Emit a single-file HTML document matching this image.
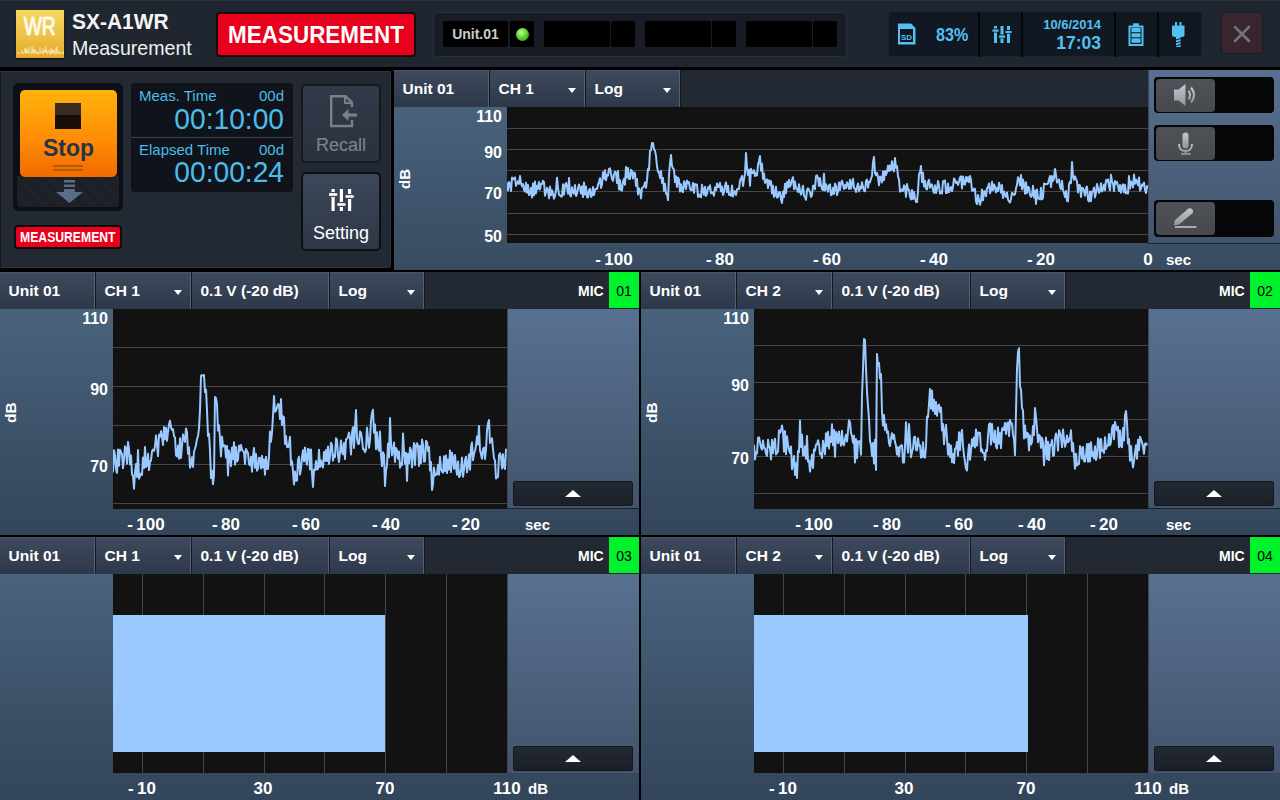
<!DOCTYPE html>
<html><head><meta charset="utf-8">
<style>
*{margin:0;padding:0;box-sizing:border-box}
html,body{width:1280px;height:800px;overflow:hidden;background:#000;font-family:"Liberation Sans",sans-serif;color:#fff}
.a{position:absolute}
.topbar{left:0;top:0;width:1280px;height:67px;background:#1f2630;border-top:1px solid #2c3440}
.hdr{background:linear-gradient(#3a4454,#2a323e)}
.tab{position:absolute;top:0;height:37px;background:linear-gradient(#3e4a5d,#2d384a);border-right:1px solid #141920;box-shadow:inset -1px 0 #56616f,inset 0 1px #475366;font-weight:bold;font-size:15.5px;line-height:38px;padding-left:8.5px}
.dd{position:absolute;right:9px;top:18px;width:0;height:0;border-left:4px solid transparent;border-right:4px solid transparent;border-top:5px solid #fff}
.axisbg{background:linear-gradient(#4c6883,#33455a)}
.plot{position:absolute;background:#121212;overflow:hidden}
.gl{position:absolute;left:0;right:0;height:1px;background:#464646}
.vl{position:absolute;top:0;bottom:0;width:1px;background:#464646}
.lbl{position:absolute;font-size:16px;font-weight:bold;color:#fff;white-space:nowrap}
.lblr{position:absolute;font-size:16px;font-weight:bold;color:#fff;white-space:nowrap;text-align:right}
.sidebg{background:linear-gradient(#587190,#43546c);box-shadow:inset 1px 0 #3a4658}
.upbtn{position:absolute;background:linear-gradient(#232932,#1b2028);border:1px solid #14181e;border-radius:2px}
.upbtn:after{content:"";position:absolute;left:50%;top:8px;margin-left:-8px;border-left:8px solid transparent;border-right:8px solid transparent;border-bottom:7px solid #fff}
.cell{position:absolute;background:#000;border-radius:2px}
</style></head><body>

<!-- ================= TOP BAR ================= -->
<div class="a topbar"></div>
<!-- logo -->
<div class="a" style="left:16px;top:10px;width:48px;height:48px;background:linear-gradient(#f6d662,#eec447 50%,#e4a82a);box-shadow:0 1px 1px #0a0c10;overflow:hidden">
  <div class="a" style="left:0;top:1px;width:48px;text-align:center;font-size:26px;color:#fbfbf4;-webkit-text-stroke:0.5px #fbfbf4;text-shadow:0 0 2px #fff6c0"><span style="display:inline-block;transform:scaleX(0.74)">WR</span></div>
  <svg class="a" style="left:0;top:0" width="48" height="48"><polyline points="1.0,42.3 1.5,42.8 2.0,42.1 2.5,44.0 3.0,43.8 3.5,43.1 4.0,43.4 4.5,43.4 5.0,43.0 5.5,43.4 6.0,40.2 6.5,42.0 7.0,41.9 7.5,44.1 8.0,42.5 8.5,42.6 9.0,38.2 9.5,43.3 10.0,37.7 10.5,43.6 11.0,39.5 11.5,43.0 12.0,42.0 12.5,43.8 13.0,37.0 13.5,41.5 14.0,40.8 14.5,43.7 15.0,44.0 15.5,42.8 16.0,35.7 16.5,42.9 17.0,38.7 17.5,43.4 18.0,40.1 18.5,44.3 19.0,39.2 19.5,42.1 20.0,40.9 20.5,43.9 21.0,41.7 21.5,44.4 22.0,42.3 22.5,44.0 23.0,43.2 23.5,43.8 24.0,37.4 24.5,43.3 25.0,41.5 25.5,41.6 26.0,41.9 26.5,43.5 27.0,38.2 27.5,43.8 28.0,40.8 28.5,42.7 29.0,39.6 29.5,41.9 30.0,36.5 30.5,43.0 31.0,40.3 31.5,44.1 32.0,42.6 32.5,42.9 33.0,40.0 33.5,43.3 34.0,42.8 34.5,44.7 35.0,37.8 35.5,43.2 36.0,40.0 36.5,43.5 37.0,39.8 37.5,43.0 38.0,40.4 38.5,41.8 39.0,44.7 39.5,42.3 40.0,38.2 40.5,44.0 41.0,36.6 41.5,43.3 42.0,43.0 42.5,43.6 43.0,40.5 43.5,43.5 44.0,42.1 44.5,44.0 45.0,43.4 45.5,42.8 46.0,43.5 46.5,44.2 47.0,41.0 47.5,44.4" fill="none" stroke="#fff8d8" stroke-width="0.7" opacity=".75"/></svg>
</div>
<div class="a" style="left:72px;top:9px;font-size:21.7px;font-weight:bold;color:#f4f4f4;transform:scaleX(0.965);transform-origin:left">SX-A1WR</div>
<div class="a" style="left:72px;top:37px;font-size:19.6px;color:#f0f0f0">Measurement</div>
<!-- red MEASUREMENT -->
<div class="a" style="left:216px;top:12px;width:200px;height:45px;background:#e8001c;border:2px solid #120a0c;border-radius:4px;font-size:24px;font-weight:bold;display:flex;justify-content:center;align-items:center;white-space:nowrap"><span style="display:inline-block;transform:scaleX(0.935)">MEASUREMENT</span></div>
<!-- status box -->
<div class="a" style="left:433px;top:12px;width:414px;height:45px;background:#181d25;border:1px solid #2a313c;border-radius:4px"></div>
<div class="cell" style="left:443px;top:21px;width:65px;height:26px;font-size:14px;font-weight:bold;color:#cbcbcb;text-align:center;line-height:26px">Unit.01</div>
<div class="cell" style="left:510px;top:21px;width:24px;height:26px"></div>
<div class="a" style="left:516px;top:28px;width:13px;height:13px;border-radius:50%;background:radial-gradient(circle at 40% 35%,#b8ff90,#4ec020 60%,#2a8a10)"></div>
<div class="cell" style="left:544px;top:21px;width:66px;height:26px"></div>
<div class="cell" style="left:611px;top:21px;width:24px;height:26px"></div>
<div class="cell" style="left:645px;top:21px;width:66px;height:26px"></div>
<div class="cell" style="left:712px;top:21px;width:24px;height:26px"></div>
<div class="cell" style="left:746px;top:21px;width:66px;height:26px"></div>
<div class="cell" style="left:813px;top:21px;width:24px;height:26px"></div>
<!-- right status -->
<div class="a" style="left:888px;top:11px;width:314px;height:46px;background:#121821;border:1px solid #1b222c;border-radius:4px"></div>
<div class="a" style="left:978px;top:12px;width:1.5px;height:45px;background:#05070a"></div>
<div class="a" style="left:1021px;top:12px;width:1.5px;height:45px;background:#05070a"></div>
<div class="a" style="left:1114px;top:12px;width:1.5px;height:45px;background:#05070a"></div>
<div class="a" style="left:1157px;top:12px;width:1.5px;height:45px;background:#05070a"></div>
<svg class="a" style="left:897px;top:23px" width="20" height="23">
 <path d="M1,0.5 H14 L18.5,5 V21.5 H1 Z" fill="#52c0f0"/>
 <rect x="3" y="6" width="13" height="13" fill="#121821"/>
 <text x="9.5" y="16.5" font-size="8" font-weight="bold" fill="#52c0f0" text-anchor="middle" font-family="Liberation Sans">SD</text>
</svg>
<div class="a" style="left:936px;top:24px;font-size:18.5px;font-weight:bold;color:#52c0f0;transform:scaleX(0.87);transform-origin:left">83%</div>
<svg class="a" style="left:992px;top:25px" width="21" height="19">
 <g fill="#52c0f0"><rect x="2" y="1" width="3" height="17"/><rect x="8.5" y="1" width="3" height="17"/><rect x="15" y="1" width="3" height="17"/></g>
 <g fill="#121821"><rect x="2" y="3.5" width="3" height="4"/><rect x="8.5" y="9.5" width="3" height="4"/><rect x="15" y="5" width="3" height="4"/></g>
 <g fill="#52c0f0"><rect x="0.5" y="4.5" width="6" height="2.2"/><rect x="7" y="10.5" width="6" height="2.2"/><rect x="13.5" y="6" width="6" height="2.2"/></g>
</svg>
<div class="a" style="left:1001px;top:17px;width:100px;text-align:right;font-size:13px;font-weight:bold;color:#52c0f0">10/6/2014</div>
<div class="a" style="left:1001px;top:33px;width:100px;text-align:right;font-size:17.5px;font-weight:bold;color:#52c0f0">17:03</div>
<svg class="a" style="left:1128px;top:23px" width="16" height="23">
 <rect x="5" y="0.3" width="6" height="3" fill="#52c0f0"/>
 <rect x="1.5" y="3.5" width="13" height="18.5" fill="none" stroke="#52c0f0" stroke-width="2"/>
 <g fill="#52c0f0"><rect x="3.5" y="5" width="9" height="4.2"/><rect x="3.5" y="10.3" width="9" height="4"/><rect x="3.5" y="15.3" width="9" height="4.5"/></g>
</svg>
<svg class="a" style="left:1171px;top:21px" width="15" height="27">
 <g fill="#52c0f0"><rect x="4" y="1" width="2" height="4"/><rect x="8.5" y="1" width="2" height="4"/>
 <path d="M1,4.5 H13.5 V13.5 Q13.5,16 11,16 H3.5 Q1,16 1,13.5 Z"/>
 <rect x="5" y="16" width="4.5" height="10"/></g>
 <g stroke="#121821" stroke-width="1"><line x1="5" y1="19" x2="9.5" y2="17.5"/><line x1="5" y1="22" x2="9.5" y2="20.5"/><line x1="5" y1="25" x2="9.5" y2="23.5"/></g>
</svg>
<!-- close -->
<div class="a" style="left:1221px;top:12px;width:42px;height:42px;background:#3a2430;border:1px solid #181c24;border-radius:3px"></div>
<svg class="a" style="left:1233px;top:25px" width="18" height="18"><path d="M2,2 L16,16 M16,2 L2,16" stroke="#6f7478" stroke-width="2.6" stroke-linecap="round"/></svg>

<!-- ================= LEFT CONTROL PANEL ================= -->
<div class="a" style="left:0;top:71px;width:391px;height:197px;background:#222933;border:1px solid #2c333e;border-left-color:#14181e;border-radius:0 0 3px 0"></div>
<!-- stop container -->
<div class="a" style="left:13px;top:83px;width:110px;height:128px;background:#0c0f13;border-radius:6px"></div>
<div class="a" style="left:17px;top:176px;width:102px;height:31px;background:repeating-linear-gradient(45deg,#1a1e24 0 1px,#20252c 1px 2px);border-radius:0 0 4px 4px"></div>
<div class="a" style="left:20px;top:90px;width:97px;height:87px;background:linear-gradient(#ffb40c,#fd8a06 60%,#f26a00);border-radius:5px"></div>
<div class="a" style="left:55px;top:103px;width:26px;height:26px;background:linear-gradient(#3d2b22 0 45%,#170e09 45%)"></div>
<div class="a" style="left:20px;top:135px;width:97px;text-align:center;font-size:23px;font-weight:bold;color:#283444">Stop</div>
<div class="a" style="left:53px;top:165px;width:30px;height:2px;background:#b35a05"></div>
<div class="a" style="left:53px;top:169px;width:30px;height:2px;background:#b35a05"></div>
<svg class="a" style="left:56px;top:180px" width="27" height="23"><g fill="#5a6d88"><rect x="8" y="0" width="11" height="2.5"/><rect x="8" y="4.5" width="11" height="2.5"/><path d="M8,9 H19 V12 H27 L13.5,23 L0,12 H8 Z"/></g></svg>
<div class="a" style="left:14px;top:225px;width:108px;height:24px;background:#e8001c;border:2px solid #0d0a0b;border-radius:4px;font-size:14.5px;font-weight:bold;display:flex;justify-content:center;align-items:center;white-space:nowrap"><span style="display:inline-block;transform:scaleX(0.84)">MEASUREMENT</span></div>
<!-- time box -->
<div class="a" style="left:131px;top:83px;width:162px;height:109px;background:#10141a;border-radius:4px"></div>
<div class="a" style="left:131px;top:137px;width:162px;height:1px;background:#394250"></div>
<div class="a" style="left:139px;top:87px;font-size:15px;color:#4dbcea">Meas. Time</div>
<div class="a" style="left:259px;top:87px;font-size:15px;color:#4dbcea">00d</div>
<div class="a" style="left:134px;top:102px;width:150px;text-align:right;font-size:29.5px;color:#4dbcea;transform:scaleX(0.955);transform-origin:right">00:10:00</div>
<div class="a" style="left:139px;top:141px;font-size:15px;color:#4dbcea">Elapsed Time</div>
<div class="a" style="left:259px;top:141px;font-size:15px;color:#4dbcea">00d</div>
<div class="a" style="left:134px;top:155px;width:150px;text-align:right;font-size:29.5px;color:#4dbcea;transform:scaleX(0.955);transform-origin:right">00:00:24</div>
<!-- recall -->
<div class="a" style="left:301px;top:84px;width:80px;height:79px;background:linear-gradient(#313a48,#2a3240);border:2px solid #15191f;border-radius:5px"></div>
<svg class="a" style="left:329px;top:95px" width="30" height="34"><path d="M23,12 V7.5 L16.5,1.2 H2.2 V31 H23 V25" fill="none" stroke="#7b8088" stroke-width="2.4"/><path d="M16,1.5 V8 H23" fill="none" stroke="#7b8088" stroke-width="2"/><path d="M28,20 H17" stroke="#7b8088" stroke-width="3.2"/><path d="M13,20 L19.5,14 V26 Z" fill="#7b8088"/></svg>
<div class="a" style="left:301px;top:135px;width:80px;text-align:center;font-size:18px;color:#80858c">Recall</div>
<!-- setting -->
<div class="a" style="left:301px;top:172px;width:80px;height:79px;background:linear-gradient(#3c4759,#2e3747);border:2px solid #0c0f13;border-radius:5px"></div>
<svg class="a" style="left:329px;top:188px" width="25" height="24">
 <g fill="#fff"><rect x="2.5" y="1" width="3.2" height="22"/><rect x="10.8" y="1" width="3.2" height="22"/><rect x="19" y="1" width="3.2" height="22"/></g>
 <g fill="#35404f"><rect x="2.5" y="4" width="3.2" height="5"/><rect x="10.8" y="14" width="3.2" height="5"/><rect x="19" y="6" width="3.2" height="5"/></g>
 <g fill="#fff"><rect x="0" y="5.2" width="8.2" height="2.6"/><rect x="8.3" y="15.2" width="8.2" height="2.6"/><rect x="16.5" y="7.2" width="8.2" height="2.6"/></g>
</svg>
<div class="a" style="left:301px;top:223px;width:80px;text-align:center;font-size:18px;color:#fff">Setting</div>

<!-- ================= TOP CHART PANEL ================= -->
<div class="a axisbg" style="left:394px;top:70px;width:886px;height:200px;background:linear-gradient(#4c6883,#384b61)"></div>
<div class="a" style="left:394px;top:70px;width:886px;height:37px;background:#222933"></div>
<div class="tab" style="left:394px;top:70px;width:96px">Unit 01</div>
<div class="tab" style="left:490px;top:70px;width:96px">CH 1<span class="dd"></span></div>
<div class="tab" style="left:586px;top:70px;width:95px">Log<span class="dd"></span></div>
<div class="plot" style="left:507px;top:107px;width:641px;height:136px">
 <div class="gl" style="top:21px"></div><div class="gl" style="top:42px"></div><div class="gl" style="top:63px"></div>
 <div class="gl" style="top:84px"></div><div class="gl" style="top:106px"></div><div class="gl" style="top:127px"></div>
</div>
<svg class="a" style="left:0;top:0" width="1280" height="800"><defs><clipPath id="c1"><rect x="507" y="107" width="641" height="136"/></clipPath></defs>
<polyline clip-path="url(#c1)" points="507,182.6 508,190.5 509,181.9 510,183.9 511,190.9 512,177.6 513,179.3 514,179.3 515,177.3 516,185.8 517,183.2 518,181.4 519,183.9 520,175.9 521,183.3 522,186.2 523,184.0 524,189.8 525,191.6 526,182.8 527,192.7 528,185.0 529,195.1 530,193.8 531,187.8 532,197.4 533,183.6 534,195.3 535,181.6 536,193.4 537,185.7 538,188.9 539,182.0 540,189.4 541,183.9 542,184.1 543,180.8 544,181.9 545,195.8 546,192.3 547,187.8 548,190.0 549,198.3 550,186.5 551,195.3 552,190.3 553,193.9 554,198.7 555,196.0 556,190.1 557,177.7 558,187.7 559,194.6 560,195.4 561,196.5 562,196.4 563,184.3 564,194.7 565,185.3 566,183.0 567,186.7 568,193.6 569,178.1 570,195.2 571,196.5 572,187.2 573,192.0 574,193.7 575,185.0 576,196.0 577,193.6 578,188.6 579,184.4 580,188.0 581,193.5 582,186.2 583,197.1 584,182.4 585,194.5 586,186.6 587,197.2 588,197.5 589,190.2 590,188.8 591,197.0 592,195.7 593,186.9 594,195.1 595,189.5 596,188.9 597,189.0 598,184.8 599,181.7 600,178.2 601,188.0 602,184.4 603,172.3 604,178.8 605,170.2 606,180.3 607,175.0 608,175.5 609,168.9 610,168.2 611,174.0 612,178.9 613,180.9 614,174.5 615,171.6 616,172.6 617,183.1 618,171.1 619,189.5 620,180.0 621,190.1 622,190.6 623,181.7 624,178.8 625,184.7 626,166.9 627,177.4 628,168.0 629,179.0 630,178.9 631,169.8 632,171.2 633,178.6 634,172.6 635,173.2 636,186.0 637,179.1 638,194.5 639,188.3 640,190.7 641,198.4 642,187.8 643,187.6 644,186.3 645,182.2 646,187.8 647,180.4 648,168.7 649,170.0 650,150.9 651,150.3 652,143.0 653,143.0 654,149.4 655,150.6 656,155.9 657,166.3 658,171.9 659,172.0 660,177.9 661,170.9 662,183.0 663,177.9 664,190.8 665,183.7 666,193.7 667,193.7 668,200.1 669,175.0 670,163.4 671,155.0 672,166.0 673,168.4 674,169.6 675,182.1 676,176.3 677,187.0 678,177.4 679,179.9 680,191.6 681,184.3 682,191.3 683,192.1 684,181.2 685,183.0 686,189.1 687,180.6 688,183.3 689,182.1 690,188.8 691,190.3 692,190.1 693,182.9 694,192.8 695,184.0 696,185.0 697,184.5 698,197.0 699,194.5 700,196.4 701,197.3 702,184.7 703,190.2 704,194.8 705,186.8 706,195.9 707,193.8 708,187.3 709,188.8 710,185.3 711,193.3 712,192.8 713,192.4 714,195.7 715,187.4 716,190.3 717,183.5 718,186.9 719,186.7 720,182.8 721,191.3 722,186.6 723,194.9 724,192.2 725,185.8 726,182.4 727,192.1 728,185.7 729,195.0 730,193.7 731,195.8 732,185.5 733,196.5 734,191.3 735,191.5 736,195.1 737,189.4 738,188.7 739,189.1 740,180.7 741,178.5 742,176.0 743,186.0 744,179.2 745,173.4 746,153.0 747,167.5 748,174.9 749,169.8 750,185.8 751,168.7 752,173.0 753,172.9 754,170.1 755,176.1 756,173.0 757,175.5 758,164.9 759,160.7 760,156.0 761,170.7 762,163.8 763,178.9 764,173.4 765,182.8 766,181.4 767,179.4 768,188.1 769,180.3 770,184.7 771,181.1 772,193.5 773,185.7 774,196.9 775,195.5 776,186.8 777,197.6 778,197.0 779,192.0 780,192.4 781,199.7 782,203.0 783,191.6 784,197.1 785,183.7 786,193.2 787,182.1 788,187.6 789,179.9 790,186.7 791,183.8 792,179.8 793,177.2 794,189.2 795,181.6 796,188.2 797,189.2 798,192.0 799,184.2 800,191.4 801,194.6 802,190.9 803,185.8 804,195.7 805,197.2 806,199.8 807,190.3 808,188.3 809,190.1 810,192.2 811,197.0 812,195.1 813,185.9 814,185.5 815,189.2 816,176.0 817,175.4 818,178.1 819,186.0 820,178.1 821,185.3 822,189.0 823,190.2 824,173.7 825,190.6 826,184.2 827,187.0 828,191.7 829,185.4 830,184.4 831,195.3 832,194.4 833,187.8 834,193.9 835,183.6 836,186.1 837,195.1 838,191.5 839,182.4 840,190.0 841,183.1 842,180.7 843,184.1 844,189.0 845,184.9 846,188.1 847,182.3 848,184.5 849,189.0 850,179.8 851,188.7 852,183.1 853,178.7 854,188.0 855,188.8 856,192.0 857,187.1 858,183.4 859,191.4 860,186.8 861,188.7 862,182.2 863,187.1 864,190.7 865,191.3 866,180.8 867,179.5 868,187.6 869,181.8 870,182.3 871,178.6 872,176.2 873,162.1 874,157.0 875,173.0 876,175.3 877,172.9 878,177.3 879,185.3 880,176.4 881,177.6 882,182.5 883,171.4 884,180.2 885,170.9 886,175.0 887,172.0 888,165.6 889,171.1 890,165.6 891,170.4 892,161.2 893,168.4 894,171.4 895,158.0 896,167.7 897,166.1 898,176.4 899,179.5 900,191.6 901,191.1 902,189.4 903,190.9 904,185.3 905,186.7 906,196.8 907,184.1 908,189.3 909,189.9 910,196.5 911,199.5 912,189.9 913,199.1 914,191.9 915,197.9 916,202.0 917,202.1 918,191.0 919,174.0 920,172.4 921,166.0 922,182.1 923,172.7 924,186.6 925,180.9 926,188.7 927,189.5 928,181.9 929,179.8 930,187.8 931,184.6 932,184.6 933,190.0 934,192.9 935,185.3 936,192.9 937,189.1 938,181.0 939,185.5 940,193.6 941,191.9 942,193.4 943,181.3 944,180.8 945,180.5 946,192.9 947,192.9 948,183.5 949,192.1 950,189.3 951,187.0 952,191.2 953,186.8 954,178.4 955,179.9 956,183.0 957,181.7 958,185.0 959,181.7 960,177.5 961,176.3 962,188.5 963,176.5 964,184.0 965,184.5 966,176.9 967,181.2 968,177.3 969,182.2 970,176.0 971,180.1 972,190.6 973,190.7 974,188.6 975,189.0 976,201.9 977,204.1 978,195.0 979,200.1 980,204.8 981,200.5 982,189.4 983,200.3 984,191.3 985,191.3 986,196.3 987,188.1 988,187.3 989,183.4 990,193.2 991,190.1 992,181.8 993,190.3 994,184.4 995,186.4 996,192.4 997,188.0 998,191.1 999,182.8 1000,186.1 1001,192.7 1002,185.1 1003,198.0 1004,191.5 1005,194.8 1006,196.9 1007,192.4 1008,199.5 1009,201.4 1010,202.6 1011,198.9 1012,192.8 1013,193.7 1014,194.9 1015,194.3 1016,188.3 1017,184.9 1018,177.2 1019,179.0 1020,185.5 1021,174.9 1022,189.3 1023,179.4 1024,184.7 1025,193.7 1026,182.3 1027,193.2 1028,186.7 1029,187.5 1030,194.9 1031,196.9 1032,195.2 1033,185.8 1034,197.4 1035,190.6 1036,203.9 1037,189.6 1038,198.6 1039,198.3 1040,199.4 1041,187.7 1042,199.3 1043,197.9 1044,183.5 1045,183.9 1046,184.0 1047,184.2 1048,183.6 1049,179.6 1050,176.0 1051,187.1 1052,176.1 1053,180.9 1054,178.1 1055,168.9 1056,175.0 1057,182.6 1058,181.4 1059,179.5 1060,186.8 1061,189.2 1062,180.8 1063,189.7 1064,193.1 1065,197.1 1066,191.1 1067,200.8 1068,201.5 1069,184.4 1070,181.6 1071,183.2 1072,162.0 1073,176.3 1074,179.7 1075,176.3 1076,179.2 1077,181.5 1078,192.4 1079,185.0 1080,185.5 1081,196.9 1082,187.8 1083,188.4 1084,190.9 1085,195.7 1086,188.0 1087,186.6 1088,200.0 1089,201.5 1090,191.6 1091,201.2 1092,191.7 1093,191.4 1094,187.5 1095,197.4 1096,192.5 1097,183.9 1098,188.3 1099,192.9 1100,190.8 1101,183.3 1102,191.5 1103,189.6 1104,184.5 1105,190.3 1106,180.1 1107,181.8 1108,179.4 1109,186.4 1110,190.4 1111,174.8 1112,181.7 1113,183.2 1114,191.2 1115,181.1 1116,183.6 1117,181.9 1118,186.4 1119,191.0 1120,185.1 1121,192.7 1122,186.3 1123,184.3 1124,192.4 1125,184.8 1126,193.4 1127,191.7 1128,193.6 1129,176.1 1130,188.5 1131,181.4 1132,183.3 1133,187.4 1134,174.5 1135,183.8 1136,179.4 1137,181.9 1138,185.2 1139,177.4 1140,190.6 1141,188.8 1142,184.5 1143,185.4 1144,182.5 1145,189.8 1146,193.1 1147,185.9 1148,188.3" fill="none" stroke="#99c9ff" stroke-width="2" stroke-linejoin="round"/></svg>
<div class="a" style="left:396px;top:189px;font-size:15px;font-weight:bold;transform:rotate(-90deg);transform-origin:left top">dB</div>
<div class="lblr" style="left:460px;top:108px;width:42px">110</div>
<div class="lblr" style="left:460px;top:144px;width:42px">90</div>
<div class="lblr" style="left:460px;top:185px;width:42px">70</div>
<div class="lblr" style="left:460px;top:227.5px;width:42px">50</div>
<div class="lblr" style="left:584px;top:249.5px;width:60px;text-align:center;font-size:17px">-&#8201;100</div>
<div class="lblr" style="left:690px;top:249.5px;width:60px;text-align:center;font-size:17px">-&#8201;80</div>
<div class="lblr" style="left:797px;top:249.5px;width:60px;text-align:center;font-size:17px">-&#8201;60</div>
<div class="lblr" style="left:904px;top:249.5px;width:60px;text-align:center;font-size:17px">-&#8201;40</div>
<div class="lblr" style="left:1011px;top:249.5px;width:60px;text-align:center;font-size:17px">-&#8201;20</div>
<div class="lblr" style="left:1118px;top:249.5px;width:60px;text-align:center;font-size:17px">0</div>
<div class="lbl" style="left:1166px;top:251px;font-size:15px">sec</div>
<!-- side buttons -->
<div class="a sidebg" style="left:1148px;top:70px;width:132px;height:173px"></div><div class="a" style="left:1148px;top:243px;width:132px;height:1px;background:#1c222b"></div>
<div class="a" style="left:1154px;top:77px;width:120px;height:36px;background:#050608;border-radius:4px"></div>
<div class="a" style="left:1156px;top:79px;width:59px;height:33px;background:linear-gradient(#4e5156,#46494e);border-radius:4px"></div>
<svg class="a" style="left:1170px;top:80px" width="30" height="30"><defs><linearGradient id="ig" x1="0" y1="0" x2="0" y2="1"><stop offset="0" stop-color="#c4c8d0"/><stop offset="1" stop-color="#8e939c"/></linearGradient></defs><path d="M4,9.5 H8.5 L15.5,4 V26 L8.5,20.5 H4 Z" fill="url(#ig)"/><path d="M18.5,10.5 Q21.5,15 18.5,19.5 M21,7.5 Q27,15 21,22.5" fill="none" stroke="url(#ig)" stroke-width="2.2"/></svg>
<div class="a" style="left:1154px;top:125px;width:120px;height:36px;background:#050608;border-radius:4px"></div>
<div class="a" style="left:1156px;top:127px;width:59px;height:33px;background:linear-gradient(#4e5156,#46494e);border-radius:4px"></div>
<svg class="a" style="left:1176px;top:130px" width="20" height="26"><rect x="6.5" y="2.5" width="6" height="16" rx="3" fill="url(#ig)"/><path d="M3,14 Q3,21 9.5,21 Q16,21 16,14 M9.5,21 V23.5 M5,23.8 H14.5" fill="none" stroke="url(#ig)" stroke-width="1.8"/></svg>
<div class="a" style="left:1154px;top:200px;width:120px;height:37px;background:#050608;border-radius:4px"></div>
<div class="a" style="left:1156px;top:202px;width:59px;height:33px;background:linear-gradient(#4e5156,#46494e);border-radius:4px"></div>
<svg class="a" style="left:1170px;top:205px" width="30" height="26"><path d="M3.5,20.5 L5,15 L18.5,3.5 Q20.5,2.5 22.5,4.5 Q23.8,6.5 22.5,8.2 L9,19.5 Z" fill="url(#ig)"/><path d="M5,22 H26.5" stroke="#a8acb4" stroke-width="2"/></svg>

<!-- ================= MIDDLE LEFT ================= -->
<div class="a axisbg" style="left:0;top:272px;width:639px;height:263px"></div>
<div class="a" style="left:0;top:272px;width:639px;height:37px;background:#222933"></div>
<div class="tab" style="left:0;top:272px;width:96px">Unit 01</div>
<div class="tab" style="left:96px;top:272px;width:96px">CH 1<span class="dd"></span></div>
<div class="tab" style="left:192px;top:272px;width:138px">0.1 V (-20 dB)</div>
<div class="tab" style="left:330px;top:272px;width:95px">Log<span class="dd"></span></div>
<div class="lbl" style="left:578px;top:272px;line-height:38px;font-size:14px">MIC</div>
<div class="a" style="left:609px;top:272px;width:30px;height:36px;background:#00f22c;color:#000;font-size:14px;text-align:center;line-height:38px">01</div>
<div class="plot" style="left:113px;top:309px;width:394px;height:200px">
 <div class="gl" style="top:38px"></div><div class="gl" style="top:77px"></div><div class="gl" style="top:116px"></div><div class="gl" style="top:155px"></div><div class="gl" style="top:194px"></div>
</div>
<svg class="a" style="left:0;top:0" width="1280" height="800"><defs><clipPath id="c2"><rect x="113" y="309" width="394" height="200"/></clipPath></defs>
<polyline clip-path="url(#c2)" points="113,472.4 114,450.3 115,455.3 116,468.9 117,472.9 118,449.4 119,465.7 120,449.7 121,452.3 122,454.2 123,468.1 124,459.6 125,446.3 126,447.9 127,463.7 128,442.0 129,448.9 130,464.3 131,455.5 132,474.5 133,475.7 134,488.7 135,472.7 136,464.0 137,476.9 138,450.1 139,478.6 140,476.1 141,473.5 142,475.0 143,457.5 144,468.1 145,446.9 146,466.9 147,465.7 148,453.7 149,470.1 150,461.6 151,460.7 152,451.3 153,449.6 154,451.0 155,446.5 156,435.6 157,444.3 158,456.1 159,434.8 160,436.9 161,431.3 162,436.8 163,444.9 164,427.1 165,439.2 166,427.8 167,440.8 168,432.2 169,424.5 170,420.8 171,427.1 172,430.0 173,429.1 174,436.2 175,437.3 176,455.3 177,456.4 178,445.5 179,458.7 180,438.2 181,458.0 182,445.8 183,434.5 184,438.5 185,441.9 186,428.4 187,432.4 188,453.8 189,447.2 190,467.8 191,464.5 192,457.2 193,467.0 194,451.7 195,448.7 196,445.1 197,439.1 198,436.2 199,428.4 200,410.1 201,376.0 202,375.0 203,375.7 204,375.0 205,392.2 206,389.6 207,410.0 208,436.1 209,433.9 210,450.8 211,478.1 212,470.4 213,484.3 214,475.7 215,397.0 216,398.1 217,404.1 218,430.6 219,425.2 220,439.2 221,456.4 222,436.6 223,446.6 224,445.3 225,445.7 226,457.6 227,445.9 228,475.5 229,450.5 230,456.6 231,466.2 232,447.4 233,459.0 234,442.3 235,464.6 236,447.1 237,461.4 238,459.8 239,445.6 240,450.8 241,444.9 242,449.6 243,451.3 244,451.9 245,463.9 246,449.0 247,451.2 248,453.0 249,464.2 250,465.2 251,456.7 252,471.8 253,456.3 254,447.9 255,467.8 256,454.0 257,470.7 258,468.4 259,457.7 260,458.1 261,468.5 262,455.8 263,467.5 264,459.5 265,474.8 266,456.7 267,468.8 268,468.9 269,455.8 270,431.5 271,441.7 272,432.6 273,416.0 274,396.0 275,411.8 276,410.6 277,407.3 278,404.0 279,404.8 280,419.1 281,399.0 282,425.1 283,416.3 284,417.5 285,443.9 286,436.0 287,446.8 288,447.3 289,444.4 290,436.7 291,465.0 292,461.2 293,471.6 294,484.5 295,471.5 296,480.8 297,480.6 298,459.8 299,456.8 300,474.5 301,468.5 302,457.2 303,450.3 304,461.5 305,447.4 306,459.4 307,464.7 308,448.7 309,449.9 310,469.5 311,449.4 312,474.0 313,487.0 314,469.8 315,470.1 316,461.0 317,469.4 318,469.0 319,449.7 320,466.9 321,460.5 322,465.5 323,467.5 324,451.9 325,460.9 326,450.0 327,461.0 328,446.4 329,463.9 330,456.6 331,442.8 332,444.9 333,460.7 334,454.8 335,457.0 336,438.3 337,439.6 338,455.7 339,462.0 340,452.0 341,440.4 342,452.0 343,454.3 344,442.9 345,459.1 346,439.5 347,438.7 348,436.7 349,432.6 350,438.7 351,454.5 352,432.5 353,427.2 354,448.0 355,426.5 356,410.0 357,438.3 358,443.7 359,443.9 360,431.4 361,432.8 362,439.4 363,449.0 364,449.5 365,452.2 366,449.6 367,427.7 368,439.2 369,447.8 370,439.9 371,420.9 372,413.0 373,409.7 374,432.7 375,424.5 376,449.3 377,432.2 378,447.0 379,450.7 380,431.6 381,455.5 382,466.1 383,452.3 384,455.2 385,485.9 386,470.9 387,465.1 388,443.6 389,457.2 390,418.0 391,443.4 392,455.4 393,451.0 394,442.6 395,461.9 396,448.1 397,450.4 398,458.6 399,451.5 400,467.7 401,463.3 402,465.2 403,433.4 404,451.3 405,463.8 406,452.7 407,481.0 408,454.1 409,463.1 410,447.7 411,450.4 412,467.4 413,453.2 414,443.1 415,464.9 416,445.6 417,443.2 418,445.9 419,466.0 420,445.9 421,463.2 422,439.5 423,444.7 424,461.8 425,461.2 426,440.8 427,442.1 428,451.0 429,446.9 430,470.5 431,462.0 432,490.0 433,484.3 434,467.6 435,475.7 436,474.4 437,474.4 438,464.8 439,474.6 440,456.8 441,469.5 442,471.3 443,472.7 444,456.2 445,471.2 446,455.6 447,473.1 448,459.4 449,469.6 450,450.6 451,472.1 452,452.7 453,458.3 454,468.7 455,455.0 456,467.3 457,474.6 458,461.4 459,477.0 460,476.0 461,469.7 462,457.5 463,476.8 464,469.8 465,460.3 466,456.7 467,472.4 468,465.1 469,454.3 470,469.8 471,447.3 472,442.5 473,460.3 474,453.8 475,450.8 476,445.6 477,436.5 478,444.4 479,425.9 480,449.9 481,454.2 482,458.7 483,449.1 484,447.5 485,458.9 486,449.5 487,430.3 488,423.5 489,420.0 490,442.9 491,440.2 492,438.4 493,449.1 494,458.4 495,460.3 496,478.5 497,477.4 498,476.9 499,455.5 500,453.2 501,456.9 502,468.4 503,454.2 504,466.6 505,468.9 506,448.7" fill="none" stroke="#99c9ff" stroke-width="2" stroke-linejoin="round"/></svg>
<div class="a sidebg" style="left:507px;top:309px;width:132px;height:199px"></div>
<div class="upbtn" style="left:513px;top:481px;width:120px;height:25px"></div><div class="a" style="left:507px;top:508px;width:132px;height:1px;background:#1c222b"></div>
<div class="a" style="left:1.5px;top:423px;font-size:15.5px;font-weight:bold;transform:rotate(-90deg);transform-origin:left top">dB</div>
<div class="lblr" style="left:60px;top:310px;width:48px">110</div>
<div class="lblr" style="left:60px;top:380.5px;width:48px">90</div>
<div class="lblr" style="left:60px;top:458px;width:48px">70</div>
<div class="lblr" style="left:116px;top:514.5px;width:60px;text-align:center;font-size:17px">-&#8201;100</div>
<div class="lblr" style="left:196px;top:514.5px;width:60px;text-align:center;font-size:17px">-&#8201;80</div>
<div class="lblr" style="left:276px;top:514.5px;width:60px;text-align:center;font-size:17px">-&#8201;60</div>
<div class="lblr" style="left:356px;top:514.5px;width:60px;text-align:center;font-size:17px">-&#8201;40</div>
<div class="lblr" style="left:436px;top:514.5px;width:60px;text-align:center;font-size:17px">-&#8201;20</div>
<div class="lbl" style="left:525px;top:516px;font-size:15px">sec</div>

<!-- ================= MIDDLE RIGHT ================= -->
<div class="a axisbg" style="left:641px;top:272px;width:639px;height:263px"></div>
<div class="a" style="left:641px;top:272px;width:639px;height:37px;background:#222933"></div>
<div class="tab" style="left:641px;top:272px;width:96px">Unit 01</div>
<div class="tab" style="left:737px;top:272px;width:96px">CH 2<span class="dd"></span></div>
<div class="tab" style="left:833px;top:272px;width:138px">0.1 V (-20 dB)</div>
<div class="tab" style="left:971px;top:272px;width:95px">Log<span class="dd"></span></div>
<div class="lbl" style="left:1219px;top:272px;line-height:38px;font-size:14px">MIC</div>
<div class="a" style="left:1250px;top:272px;width:30px;height:36px;background:#00f22c;color:#000;font-size:14px;text-align:center;line-height:38px">02</div>
<div class="plot" style="left:754px;top:309px;width:394px;height:200px">
 <div class="gl" style="top:36px"></div><div class="gl" style="top:73px"></div><div class="gl" style="top:110px"></div><div class="gl" style="top:147px"></div><div class="gl" style="top:184px"></div>
</div>
<svg class="a" style="left:0;top:0" width="1280" height="800"><defs><clipPath id="c3"><rect x="754" y="309" width="394" height="200"/></clipPath></defs>
<polyline clip-path="url(#c3)" points="754,444.7 755,459.4 756,452.5 757,453.5 758,437.9 759,437.2 760,442.5 761,447.3 762,449.6 763,440.4 764,448.1 765,448.2 766,453.7 767,455.9 768,439.7 769,446.4 770,448.0 771,459.5 772,439.7 773,453.1 774,443.3 775,438.7 776,454.5 777,452.7 778,451.7 779,430.3 780,433.0 781,430.3 782,425.4 783,432.3 784,451.6 785,431.0 786,454.2 787,436.2 788,444.3 789,450.2 790,452.9 791,446.4 792,469.3 793,463.2 794,456.1 795,474.9 796,463.3 797,478.0 798,451.1 799,452.2 800,420.5 801,446.9 802,434.8 803,455.5 804,455.3 805,446.3 806,458.8 807,436.0 808,461.6 809,460.5 810,471.6 811,463.7 812,454.8 813,467.9 814,449.4 815,450.7 816,444.6 817,444.6 818,440.2 819,444.4 820,454.3 821,453.0 822,458.0 823,440.8 824,448.7 825,454.3 826,433.2 827,445.9 828,431.7 829,448.5 830,437.0 831,442.1 832,424.2 833,445.2 834,429.9 835,456.7 836,431.9 837,434.3 838,443.1 839,431.4 840,440.4 841,445.7 842,430.8 843,444.4 844,445.4 845,438.8 846,434.7 847,441.5 848,430.9 849,420.3 850,422.2 851,432.8 852,436.3 853,442.7 854,435.7 855,462.4 856,438.9 857,458.3 858,441.2 859,441.4 860,441.1 861,454.8 862,395.8 863,369.2 864,339.0 865,340.0 866,369.1 867,391.4 868,406.1 869,419.0 870,441.0 871,444.5 872,455.9 873,442.9 874,463.4 875,439.7 876,470.0 877,354.0 878,365.6 879,363.0 880,378.6 881,374.1 882,411.8 883,425.6 884,414.9 885,429.9 886,424.3 887,432.8 888,431.4 889,443.7 890,446.0 891,438.7 892,433.2 893,438.7 894,434.8 895,442.1 896,445.8 897,454.6 898,447.3 899,456.3 900,446.6 901,445.4 902,445.2 903,462.6 904,462.5 905,446.1 906,422.3 907,440.2 908,452.6 909,424.1 910,439.7 911,457.3 912,452.1 913,448.5 914,437.3 915,436.7 916,449.8 917,450.5 918,438.2 919,445.8 920,445.2 921,457.6 922,456.9 923,442.2 924,457.3 925,457.6 926,446.9 927,416.4 928,417.3 929,404.0 930,389.0 931,408.8 932,390.4 933,410.8 934,399.8 935,413.9 936,401.9 937,415.8 938,406.1 939,404.6 940,412.0 941,407.4 942,430.5 943,424.0 944,444.2 945,431.5 946,424.8 947,438.7 948,454.6 949,444.1 950,457.0 951,445.4 952,462.2 953,454.0 954,463.2 955,448.7 956,448.3 957,442.0 958,455.8 959,432.2 960,449.9 961,434.1 962,429.9 963,446.1 964,455.5 965,461.8 966,468.5 967,470.5 968,455.1 969,444.4 970,459.8 971,451.1 972,439.3 973,445.9 974,437.4 975,447.5 976,429.6 977,445.6 978,432.4 979,432.7 980,433.0 981,451.4 982,449.4 983,453.1 984,452.9 985,460.0 986,450.0 987,450.9 988,436.3 989,424.5 990,423.2 991,444.5 992,423.9 993,439.2 994,442.1 995,430.6 996,446.7 997,448.4 998,427.6 999,443.6 1000,433.0 1001,448.3 1002,428.9 1003,427.8 1004,430.2 1005,422.9 1006,434.0 1007,423.8 1008,422.3 1009,436.1 1010,420.0 1011,423.4 1012,423.4 1013,434.7 1014,438.8 1015,455.2 1016,411.4 1017,368.8 1018,352.0 1019,348.3 1020,386.3 1021,389.8 1022,408.1 1023,410.1 1024,438.4 1025,425.4 1026,437.6 1027,432.8 1028,433.5 1029,450.4 1030,435.3 1031,444.4 1032,442.1 1033,426.0 1034,435.0 1035,408.0 1036,417.2 1037,428.8 1038,442.3 1039,434.9 1040,436.1 1041,447.8 1042,437.8 1043,442.9 1044,465.3 1045,449.7 1046,437.4 1047,459.2 1048,441.8 1049,460.1 1050,444.7 1051,445.1 1052,440.0 1053,455.7 1054,455.5 1055,438.6 1056,433.5 1057,437.3 1058,450.6 1059,430.2 1060,433.1 1061,436.8 1062,447.1 1063,429.4 1064,439.0 1065,446.7 1066,443.0 1067,435.4 1068,442.2 1069,440.6 1070,436.7 1071,430.3 1072,450.9 1073,442.9 1074,455.7 1075,468.7 1076,453.7 1077,465.5 1078,464.1 1079,464.0 1080,446.1 1081,448.3 1082,458.6 1083,446.9 1084,460.9 1085,461.7 1086,454.9 1087,444.0 1088,461.7 1089,443.7 1090,461.5 1091,442.2 1092,455.9 1093,452.3 1094,458.3 1095,446.3 1096,459.9 1097,455.7 1098,438.2 1099,439.7 1100,458.3 1101,439.0 1102,450.8 1103,450.0 1104,453.0 1105,437.2 1106,448.9 1107,445.9 1108,445.8 1109,434.1 1110,445.1 1111,442.1 1112,428.3 1113,425.0 1114,439.3 1115,422.0 1116,426.8 1117,430.6 1118,426.8 1119,447.2 1120,430.6 1121,446.0 1122,447.3 1123,428.0 1124,440.4 1125,415.3 1126,411.0 1127,422.5 1128,443.4 1129,439.2 1130,460.7 1131,445.9 1132,459.6 1133,467.4 1134,461.4 1135,452.3 1136,445.3 1137,458.8 1138,439.7 1139,450.3 1140,436.7 1141,439.4 1142,442.0 1143,446.9 1144,453.8 1145,443.9 1146,443.2 1147,445.5" fill="none" stroke="#99c9ff" stroke-width="2" stroke-linejoin="round"/></svg>
<div class="a sidebg" style="left:1148px;top:309px;width:132px;height:199px"></div>
<div class="upbtn" style="left:1154px;top:481px;width:120px;height:25px"></div><div class="a" style="left:1148px;top:508px;width:132px;height:1px;background:#1c222b"></div>
<div class="a" style="left:642.5px;top:423px;font-size:15.5px;font-weight:bold;transform:rotate(-90deg);transform-origin:left top">dB</div>
<div class="lblr" style="left:701px;top:310px;width:48px">110</div>
<div class="lblr" style="left:701px;top:376.5px;width:48px">90</div>
<div class="lblr" style="left:701px;top:449.5px;width:48px">70</div>
<div class="lblr" style="left:784px;top:514.5px;width:60px;text-align:center;font-size:17px">-&#8201;100</div>
<div class="lblr" style="left:857px;top:514.5px;width:60px;text-align:center;font-size:17px">-&#8201;80</div>
<div class="lblr" style="left:929px;top:514.5px;width:60px;text-align:center;font-size:17px">-&#8201;60</div>
<div class="lblr" style="left:1002px;top:514.5px;width:60px;text-align:center;font-size:17px">-&#8201;40</div>
<div class="lblr" style="left:1074px;top:514.5px;width:60px;text-align:center;font-size:17px">-&#8201;20</div>
<div class="lbl" style="left:1166px;top:516px;font-size:15px">sec</div>

<!-- ================= BOTTOM LEFT ================= -->
<div class="a axisbg" style="left:0;top:537px;width:639px;height:263px"></div>
<div class="a" style="left:0;top:537px;width:639px;height:37px;background:#222933"></div>
<div class="tab" style="left:0;top:537px;width:96px">Unit 01</div>
<div class="tab" style="left:96px;top:537px;width:96px">CH 1<span class="dd"></span></div>
<div class="tab" style="left:192px;top:537px;width:138px">0.1 V (-20 dB)</div>
<div class="tab" style="left:330px;top:537px;width:95px">Log<span class="dd"></span></div>
<div class="lbl" style="left:578px;top:537px;line-height:38px;font-size:14px">MIC</div>
<div class="a" style="left:609px;top:537px;width:30px;height:36px;background:#00f22c;color:#000;font-size:14px;text-align:center;line-height:38px">03</div>
<div class="plot" style="left:113px;top:574px;width:394px;height:199px">
 <div class="vl" style="left:29px"></div><div class="vl" style="left:90px"></div><div class="vl" style="left:151px"></div><div class="vl" style="left:211px"></div><div class="vl" style="left:272px"></div><div class="vl" style="left:333px"></div>
 <div class="a" style="left:0;top:41px;width:272px;height:137px;background:#99c9ff"></div>
</div>
<div class="a sidebg" style="left:507px;top:574px;width:132px;height:199px"></div>
<div class="upbtn" style="left:513px;top:746px;width:120px;height:25px"></div>
<div class="lblr" style="left:112px;top:778.5px;width:60px;text-align:center;font-size:17px">-&#8201;10</div>
<div class="lblr" style="left:233px;top:778.5px;width:60px;text-align:center;font-size:17px">30</div>
<div class="lblr" style="left:355px;top:778.5px;width:60px;text-align:center;font-size:17px">70</div>
<div class="lblr" style="left:477px;top:778.5px;width:60px;text-align:center;font-size:17px">110</div>
<div class="lbl" style="left:528px;top:780px;font-size:15px">dB</div>

<!-- ================= BOTTOM RIGHT ================= -->
<div class="a axisbg" style="left:641px;top:537px;width:639px;height:263px"></div>
<div class="a" style="left:641px;top:537px;width:639px;height:37px;background:#222933"></div>
<div class="tab" style="left:641px;top:537px;width:96px">Unit 01</div>
<div class="tab" style="left:737px;top:537px;width:96px">CH 2<span class="dd"></span></div>
<div class="tab" style="left:833px;top:537px;width:138px">0.1 V (-20 dB)</div>
<div class="tab" style="left:971px;top:537px;width:95px">Log<span class="dd"></span></div>
<div class="lbl" style="left:1219px;top:537px;line-height:38px;font-size:14px">MIC</div>
<div class="a" style="left:1250px;top:537px;width:30px;height:36px;background:#00f22c;color:#000;font-size:14px;text-align:center;line-height:38px">04</div>
<div class="plot" style="left:754px;top:574px;width:394px;height:199px">
 <div class="vl" style="left:29px"></div><div class="vl" style="left:90px"></div><div class="vl" style="left:151px"></div><div class="vl" style="left:211px"></div><div class="vl" style="left:272px"></div><div class="vl" style="left:333px"></div>
 <div class="a" style="left:0;top:41px;width:274px;height:137px;background:#99c9ff"></div>
</div>
<div class="a sidebg" style="left:1148px;top:574px;width:132px;height:199px"></div>
<div class="upbtn" style="left:1154px;top:746px;width:120px;height:25px"></div>
<div class="lblr" style="left:753px;top:778.5px;width:60px;text-align:center;font-size:17px">-&#8201;10</div>
<div class="lblr" style="left:874px;top:778.5px;width:60px;text-align:center;font-size:17px">30</div>
<div class="lblr" style="left:996px;top:778.5px;width:60px;text-align:center;font-size:17px">70</div>
<div class="lblr" style="left:1118px;top:778.5px;width:60px;text-align:center;font-size:17px">110</div>
<div class="lbl" style="left:1169px;top:780px;font-size:15px">dB</div>

</body></html>
